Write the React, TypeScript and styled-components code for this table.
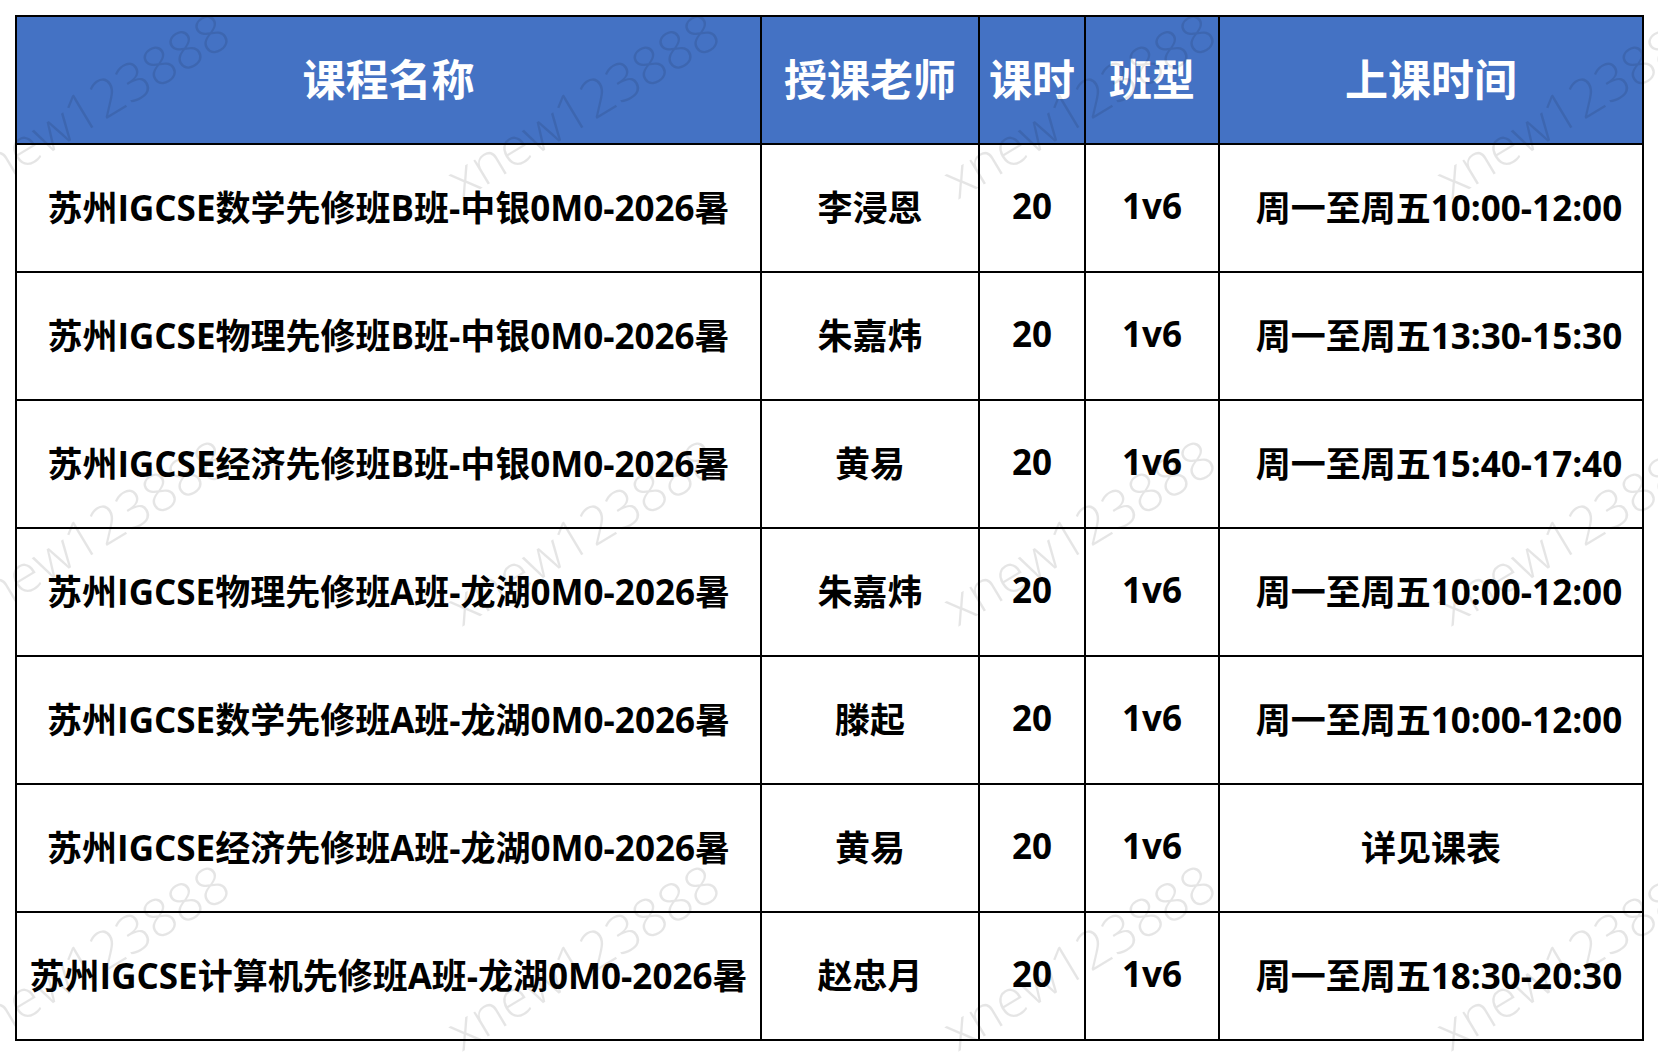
import React from "react";
import styled, { createGlobalStyle } from "styled-components";

const GlobalStyle = createGlobalStyle`
  html, body {
    margin: 0;
    padding: 0;
    background: #ffffff;
  }
  body {
    font-family: "Open Sans", "Noto Sans CJK SC", sans-serif;
  }
`;

interface Course {
  name: string;
  teacher: string;
  hours: string;
  type: string;
  time: string;
}

const courses: Course[] = [
  { name: "苏州IGCSE数学先修班B班-中银0M0-2026暑", teacher: "李浸恩", hours: "20", type: "1v6", time: "周一至周五10:00-12:00" },
  { name: "苏州IGCSE物理先修班B班-中银0M0-2026暑", teacher: "朱嘉炜", hours: "20", type: "1v6", time: "周一至周五13:30-15:30" },
  { name: "苏州IGCSE经济先修班B班-中银0M0-2026暑", teacher: "黄易", hours: "20", type: "1v6", time: "周一至周五15:40-17:40" },
  { name: "苏州IGCSE物理先修班A班-龙湖0M0-2026暑", teacher: "朱嘉炜", hours: "20", type: "1v6", time: "周一至周五10:00-12:00" },
  { name: "苏州IGCSE数学先修班A班-龙湖0M0-2026暑", teacher: "滕起", hours: "20", type: "1v6", time: "周一至周五10:00-12:00" },
  { name: "苏州IGCSE经济先修班A班-龙湖0M0-2026暑", teacher: "黄易", hours: "20", type: "1v6", time: "详见课表" },
  { name: "苏州IGCSE计算机先修班A班-龙湖0M0-2026暑", teacher: "赵忠月", hours: "20", type: "1v6", time: "周一至周五18:30-20:30" },
];

const headers = ["课程名称", "授课老师", "课时", "班型", "上课时间"];

// watermark centres, in page pixels
const marks: { x: number; y: number }[] = [];
[104, 531, 956].forEach((y) => {
  [92, 582, 1078, 1571].forEach((x) => marks.push({ x, y }));
});

const App: React.FC = () => {
  return (
    <Page>
      <GlobalStyle />
      <Grid>
        {headers.map((h) => (
          <HeadCell key={h}>{h}</HeadCell>
        ))}
        {courses.map((c, i) => (
          <React.Fragment key={i}>
            <Cell>{c.name}</Cell>
            <Cell>{c.teacher}</Cell>
            <Cell>{c.hours}</Cell>
            <Cell>{c.type}</Cell>
            <Cell $indent={c.time.length > 6}>{c.time}</Cell>
          </React.Fragment>
        ))}
      </Grid>
      <MarkLayer>
        {marks.map((m, i) => (
          <Watermark key={i} $x={m.x} $y={m.y}>
            xnew123888
          </Watermark>
        ))}
      </MarkLayer>
    </Page>
  );
};

export default App;

const Page = styled.div`
  position: relative;
  width: 1658px;
  height: 1056px;
  padding: 15px;
  box-sizing: border-box;
  overflow: hidden;
`;

const Grid = styled.div`
  display: grid;
  grid-template-columns: 745px 218px 106px 134px 424px;
  grid-auto-rows: 128px;
  width: max-content;
  border-left: 2px solid #000;
  border-top: 2px solid #000;
`;

const BaseCell = styled.div`
  display: flex;
  align-items: center;
  justify-content: center;
  box-sizing: border-box;
  padding-bottom: 6px;
  border-right: 2px solid #000;
  border-bottom: 2px solid #000;
  font-family: "Open Sans", "Noto Sans CJK SC", sans-serif;
  font-weight: 700;
  white-space: nowrap;
`;

const HeadCell = styled(BaseCell)`
  background: #4472c4;
  color: #ffffff;
  font-size: 43px;
`;

const Cell = styled(BaseCell)<{ $indent?: boolean }>`
  background: #ffffff;
  color: #000000;
  font-size: 35px;
  padding-left: ${(p) => (p.$indent ? "16px" : "0")};
`;

const MarkLayer = styled.div`
  position: absolute;
  inset: 0;
  pointer-events: none;
`;

const Watermark = styled.div<{ $x: number; $y: number }>`
  position: absolute;
  left: ${(p) => p.$x}px;
  top: ${(p) => p.$y}px;
  transform: translate(-50%, -50%) rotate(-31deg);
  font-family: "Open Sans", "Liberation Sans", sans-serif;
  font-weight: 300;
  font-size: 53px;
  color: rgba(0, 0, 0, 0.1);
  white-space: nowrap;
`;
